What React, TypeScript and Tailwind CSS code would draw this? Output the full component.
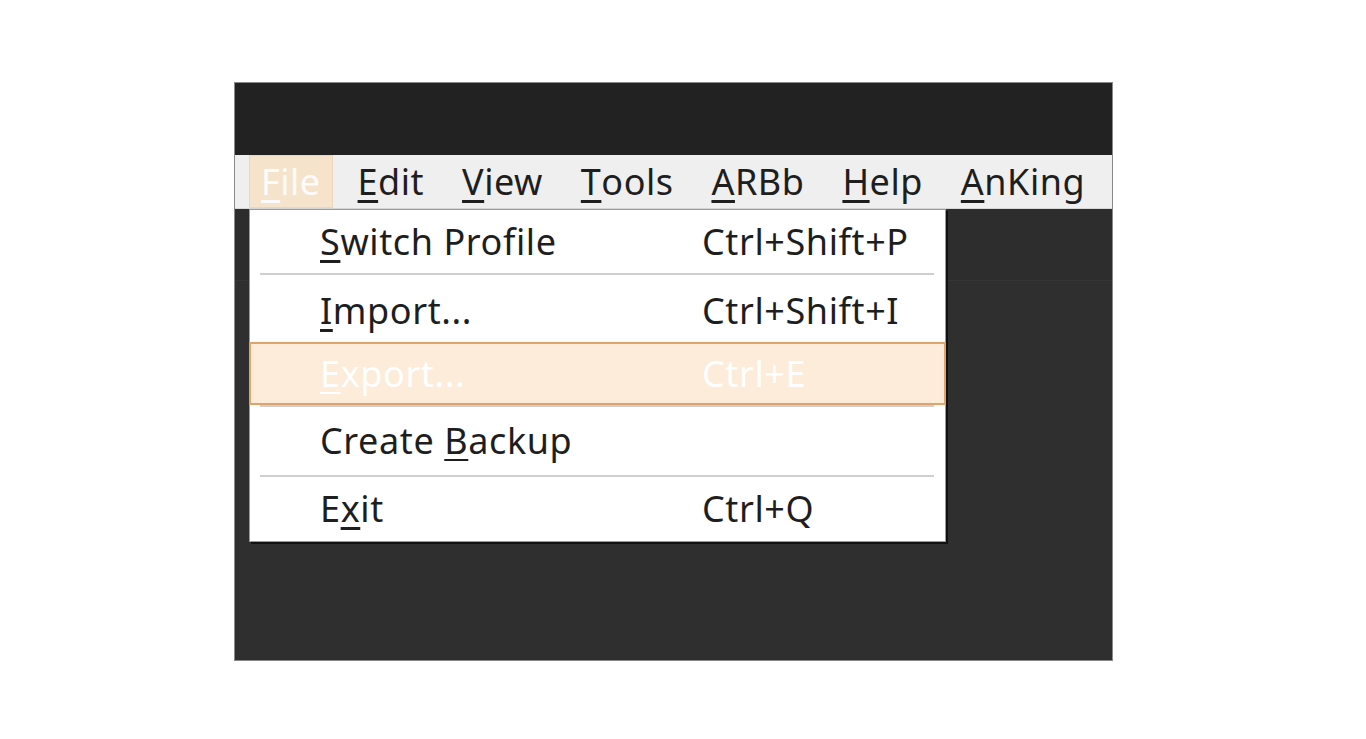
const Mn = ({ c, thin }: { c: string; thin?: boolean }) => (
  <span
    className={
      thin
        ? "underline decoration-[2px] underline-offset-[5px]"
        : "underline decoration-[3px] underline-offset-[5px]"
    }
  >
    {c}
  </span>
);

const menus: [string, string][] = [
  ["E", "dit"],
  ["V", "iew"],
  ["T", "ools"],
  ["A", "RBb"],
  ["H", "elp"],
  ["A", "nKing"],
];

const Sep = () => (
  <div className="h-[2px] px-[10px] bg-white">
    <div className="h-[2px] w-[674px] bg-[#cfcfcf]" />
  </div>
);

export default function App() {
  return (
    <div
      className="w-[1366px] h-[739px] bg-white pt-[82px] pl-[234px]"
      style={{ fontFamily: '"Noto Sans", sans-serif' }}
    >
      <div className="relative w-[879px] h-[579px] border border-[#8a8a8a] bg-[#2f2f2f] flex flex-col">
        <div className="h-[72px] bg-[#222222]" />
        <div className="h-[54px] bg-[#efefef] border-b border-[#d6d6d6] flex items-stretch pl-[14px] gap-[12px] text-[36px] leading-none text-[#1e1e1e] tracking-[0.5px]">
          <div className="flex items-center px-[11px] bg-[#f6e3cc] border border-[#efd6b8] text-[#fbfbfb]">
            <Mn c="F" />ile
          </div>
          {menus.map(([m, rest], i) => (
            <div key={i} className="flex items-center px-[13px]">
              <Mn c={m} />
              {rest}
            </div>
          ))}
        </div>
        <div className="h-[72px] bg-[#2d2d2d] border-b border-[#353535]" />

        {/* dropdown */}
        <div className="absolute left-[14px] top-[126px] w-[697px] bg-white border border-[#9a9a9a] shadow-[2px_2px_0_#111] text-[36px] leading-none text-[#1e1e1e] tracking-[0.6px]">
          <div className="h-[63px] flex items-center pl-[70px]">
            <div className="w-[382px]">
              <Mn c="S" />witch Profile
            </div>
            <div>Ctrl+Shift+P</div>
          </div>
          <Sep />
          <div className="h-[67px] flex items-center pl-[70px] pt-[4px]">
            <div className="w-[382px]">
              <Mn c="I" />mport...
            </div>
            <div>Ctrl+Shift+I</div>
          </div>
          <div className="h-[63px] flex items-center pl-[69px] bg-[#fdecd9] border-2 border-[#dfa36e] -mx-px text-white">
            <div className="w-[382px]">
              <Mn c="E" thin />xport...
            </div>
            <div>Ctrl+E</div>
          </div>
          <Sep />
          <div className="h-[68px] flex items-center pl-[70px]">
            <div className="w-[382px]">
              Create <Mn c="B" thin />ackup
            </div>
          </div>
          <Sep />
          <div className="h-[64px] flex items-center pl-[70px]">
            <div className="w-[382px]">
              E<Mn c="x" />it
            </div>
            <div>Ctrl+Q</div>
          </div>
        </div>
      </div>
    </div>
  );
}
